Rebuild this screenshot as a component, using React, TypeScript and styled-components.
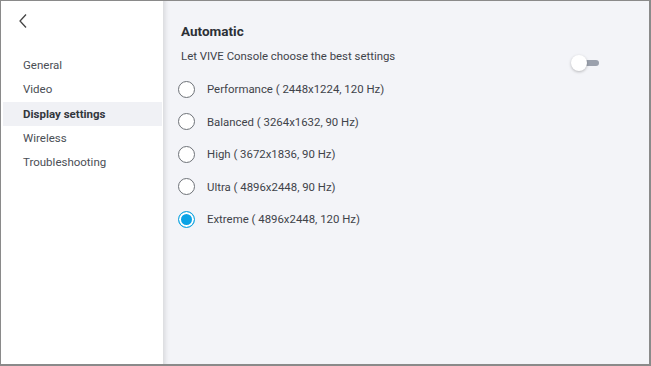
import React, { useState } from "react";
import styled, { createGlobalStyle } from "styled-components";

const Global = createGlobalStyle`
  html, body { margin: 0; padding: 0; }
  body { font-family: Roboto, "Liberation Sans", sans-serif; color: #363a40; }
`;

const Frame = styled.div`
  box-sizing: border-box;
  width: 651px;
  height: 366px;
  border: 1px solid #8a8a8a;
  border-bottom-width: 2px;
  border-right-width: 2px;
  display: flex;
  overflow: hidden;
`;

const Sidebar = styled.nav`
  width: 162px;
  background: #fff;
  display: flex;
  flex-direction: column;
  padding: 0 1px 0 2px;
  box-sizing: border-box;
`;

const Back = styled.button`
  border: 0;
  background: none;
  padding: 0;
  margin: 12px 0 0 14px;
  width: 12px;
  height: 16px;
  color: #444;
  cursor: pointer;
`;

const Menu = styled.ul`
  list-style: none;
  margin: 24px 0 0;
  padding: 0;
`;

const MenuItem = styled.li<{ $active?: boolean }>`
  height: 24.3px;
  line-height: 24.3px;
  padding-left: 20px;
  font-size: 11.5px;
  font-weight: ${(p) => (p.$active ? 700 : 400)};
  color: ${(p) => (p.$active ? "#33373d" : "#4a4e55")};
  background: ${(p) => (p.$active ? "#f0f1f5" : "transparent")};
`;

const Content = styled.main`
  flex: 1;
  background: #f3f4f8;
  box-shadow: inset 6px 0 5px -4px rgba(0, 0, 0, 0.12);
  padding: 22px 0 0 18px;
  position: relative;
`;

const Title = styled.h2`
  margin: 0;
  font-size: 13.5px;
  font-weight: 700;
  color: #2c3036;
  line-height: 16px;
`;

const SubRow = styled.div`
  display: flex;
  align-items: flex-start;
  justify-content: space-between;
  padding-right: 48px;
  margin-top: 10px;
`;

const Subtitle = styled.p`
  margin: 0;
  font-size: 11.4px;
  line-height: 14px;
  color: #3f434a;
`;

const Toggle = styled.div`
  position: relative;
  width: 30px;
  height: 18px;
  margin-top: 5px;
`;

const Track = styled.div`
  position: absolute;
  left: 10px;
  top: 6px;
  width: 18px;
  height: 6px;
  border-radius: 3px;
  background: #9ba1ad;
`;

const Thumb = styled.div`
  position: absolute;
  left: 0;
  top: 1px;
  width: 16px;
  height: 16px;
  border-radius: 50%;
  background: #fff;
  box-shadow: 0 1px 3px rgba(0, 0, 0, 0.25);
`;

const Options = styled.div`
  display: flex;
  flex-direction: column;
  margin-top: 1px;
  margin-left: -3px;
`;

const Option = styled.label`
  display: flex;
  align-items: center;
  height: 32.5px;
  font-size: 11.4px;
  color: #3f434a;
  cursor: pointer;
`;

const Radio = styled.span<{ $checked?: boolean }>`
  box-sizing: border-box;
  width: 17px;
  height: 17px;
  border-radius: 50%;
  border: 1px solid ${(p) => (p.$checked ? "#1aa7e0" : "#6e7278")};
  background: ${(p) => (p.$checked ? "#0aa3e6" : "#fff")};
  box-shadow: ${(p) => (p.$checked ? "inset 0 0 0 2px #fff" : "none")};
  margin-right: 12px;
  flex-shrink: 0;
`;

const options = [
  "Performance ( 2448x1224, 120 Hz)",
  "Balanced ( 3264x1632, 90 Hz)",
  "High ( 3672x1836, 90 Hz)",
  "Ultra ( 4896x2448, 90 Hz)",
  "Extreme ( 4896x2448, 120 Hz)",
];

export default function App() {
  const [sel, setSel] = useState(4);
  return (
    <>
      <Global />
      <Frame>
        <Sidebar>
          <Back aria-label="Back">
            <svg width="10" height="16" viewBox="0 0 10 16">
              <path d="M8 1.5 L2 8 L8 14.5" fill="none" stroke="currentColor" strokeWidth="1.3" />
            </svg>
          </Back>
          <Menu>
            <MenuItem>General</MenuItem>
            <MenuItem>Video</MenuItem>
            <MenuItem $active>Display settings</MenuItem>
            <MenuItem>Wireless</MenuItem>
            <MenuItem>Troubleshooting</MenuItem>
          </Menu>
        </Sidebar>
        <Content>
          <Title>Automatic</Title>
          <SubRow>
            <Subtitle>Let VIVE Console choose the best settings</Subtitle>
            <Toggle>
              <Track />
              <Thumb />
            </Toggle>
          </SubRow>
          <Options>
            {options.map((o, i) => (
              <Option key={o} onClick={() => setSel(i)}>
                <Radio $checked={sel === i} />
                {o}
              </Option>
            ))}
          </Options>
        </Content>
      </Frame>
    </>
  );
}
